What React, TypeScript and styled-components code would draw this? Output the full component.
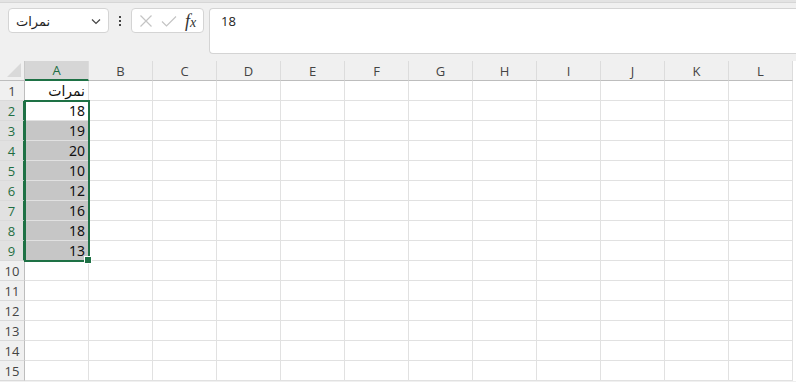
import React from 'react';
import styled, {createGlobalStyle} from 'styled-components';

const GlobalStyle = createGlobalStyle`
  html, body {
    margin: 0;
    padding: 0;
    background: #f0f0f0;
    overflow: hidden;
  }
  body {
    font-family: "Open Sans", "Noto Sans", sans-serif;
  }
`;

const COLUMNS = ['A', 'B', 'C', 'D', 'E', 'F', 'G', 'H', 'I', 'J', 'K', 'L'];
const ROWS = 15;
const values: Record<number, string> = {
  1: 'نمرات',
  2: '18',
  3: '19',
  4: '20',
  5: '10',
  6: '12',
  7: '16',
  8: '18',
  9: '13',
};

export default function App() {
  return (
    <Page>
      <GlobalStyle />
      <TopEdge />
      <Toolbar>
        <NameBox>
          <NameText>نمرات</NameText>
          <svg width="12" height="12" viewBox="0 0 12 12">
            <path d="M2 4.5 L6 8.5 L10 4.5" fill="none" stroke="#444" strokeWidth="1.2" />
          </svg>
        </NameBox>
        <Dots>
          <span />
          <span />
          <span />
        </Dots>
        <FormulaButtons>
          <svg width="14" height="14" viewBox="0 0 14 14">
            <path d="M1.5 1.5 L12.5 12.5 M12.5 1.5 L1.5 12.5" stroke="#c4c4c4" strokeWidth="1.2" />
          </svg>
          <svg width="16" height="14" viewBox="0 0 16 14">
            <path d="M1 7.5 L5.5 12 L15 2.5" fill="none" stroke="#c4c4c4" strokeWidth="1.2" />
          </svg>
          <Fx>
            f<sub>x</sub>
          </Fx>
        </FormulaButtons>
        <FormulaInput>18</FormulaInput>
      </Toolbar>
      <Sheet>
        <Corner>
          <svg width="14" height="14" viewBox="0 0 14 14">
            <path d="M14 0 L14 14 L0 14 Z" fill="#d9d9d9" />
          </svg>
        </Corner>
        {COLUMNS.map(c => (
          <ColHeader key={c} active={c === 'A'}>
            {c}
          </ColHeader>
        ))}
        {Array.from({length: ROWS}, (_, i) => i + 1).map(r => (
          <React.Fragment key={r}>
            <RowHeader active={r >= 2 && r <= 9}>{r}</RowHeader>
            {COLUMNS.map(c => (
              <Cell key={c} selected={c === 'A' && r >= 3 && r <= 9}>
                {c === 'A' ? values[r] : ''}
              </Cell>
            ))}
          </React.Fragment>
        ))}
        <Selection>
          <Handle />
        </Selection>
      </Sheet>
    </Page>
  );
}

const Page = styled.div`
  width: 796px;
  height: 382px;
  overflow: hidden;
  background: #f0f0f0;
`;

const TopEdge = styled.div`
  height: 2px;
  background: #e3e3e3;
  border-bottom: 1px solid #d6d6d6;
`;

const Toolbar = styled.div`
  display: flex;
  align-items: flex-start;
  padding: 5px 0 0 8px;
  height: 55px;
  box-sizing: border-box;
`;

const NameBox = styled.div`
  width: 101px;
  height: 25px;
  box-sizing: border-box;
  background: #fff;
  border: 1px solid #d4d4d4;
  border-radius: 4px;
  display: flex;
  align-items: center;
  justify-content: space-between;
  padding: 0 6px 0 7px;
`;

const NameText = styled.span`
  font-size: 13px;
  color: #222;
  font-family: "Noto Sans", "DejaVu Sans", sans-serif;
`;

const Dots = styled.div`
  width: 22px;
  height: 25px;
  display: flex;
  flex-direction: column;
  align-items: center;
  justify-content: center;
  gap: 2px;
  span {
    width: 2px;
    height: 2px;
    background: #444;
  }
`;

const FormulaButtons = styled.div`
  width: 73px;
  height: 25px;
  box-sizing: border-box;
  background: #fff;
  border: 1px solid #d4d4d4;
  border-radius: 4px;
  display: flex;
  align-items: center;
  gap: 8px;
  padding: 0 4px 0 7px;
`;

const Fx = styled.span`
  font-family: "Liberation Serif", serif;
  font-style: italic;
  font-size: 18px;
  color: #333;
  line-height: 1;
  sub {
    font-size: 14px;
    vertical-align: baseline;
  }
`;

const FormulaInput = styled.div`
  margin-left: 5px;
  flex: 1;
  height: 46px;
  box-sizing: border-box;
  background: #fff;
  border: 1px solid #d4d4d4;
  border-right: none;
  border-radius: 4px 0 0 4px;
  padding: 3px 0 0 11px;
  font-size: 13px;
  color: #222;
`;

const Sheet = styled.div`
  position: relative;
  display: grid;
  grid-template-columns: 25px repeat(12, 64px);
  grid-template-rows: 20px;
  grid-auto-rows: 20px;
  background: #fff;
  margin-top: 3px;
`;

const Corner = styled.div`
  background: #f0f0f0;
  border-right: 1px solid #c8c8c8;
  border-bottom: 1px solid #bdbdbd;
  box-sizing: border-box;
  display: flex;
  align-items: flex-end;
  justify-content: flex-end;
  padding: 0 3px 3px 0;
`;

const ColHeader = styled.div<{active?: boolean}>`
  box-sizing: border-box;
  background: ${p => (p.active ? '#d6d6d6' : '#f0f0f0')};
  color: ${p => (p.active ? '#1e6e42' : '#444')};
  border-right: 1px solid #dcdcdc;
  border-bottom: ${p => (p.active ? '2px solid #1e7145' : '1px solid #bdbdbd')};
  font-size: 13px;
  display: flex;
  align-items: center;
  justify-content: center;
`;

const RowHeader = styled.div<{active?: boolean}>`
  box-sizing: border-box;
  background: ${p => (p.active ? '#e1e1e1' : '#f0f0f0')};
  color: ${p => (p.active ? '#1e6e42' : '#444')};
  border-right: ${p => (p.active ? '2px solid #1e7145' : '1px solid #bdbdbd')};
  border-bottom: 1px solid #dadada;
  font-size: 13px;
  display: flex;
  align-items: center;
  justify-content: center;
`;

const Cell = styled.div<{selected?: boolean}>`
  box-sizing: border-box;
  background: ${p => (p.selected ? '#c6c6c6' : '#fff')};
  border-right: 1px solid #e1e1e1;
  border-bottom: 1px solid #e1e1e1;
  font-size: 14px;
  color: #111;
  display: flex;
  align-items: center;
  justify-content: flex-end;
  padding-right: 3px;
  font-family: "Noto Sans", "DejaVu Sans", sans-serif;
`;

const Selection = styled.div`
  position: absolute;
  left: 24px;
  top: 39px;
  width: 66px;
  height: 162px;
  box-sizing: border-box;
  border: 2px solid #1e7145;
  pointer-events: none;
`;

const Handle = styled.div`
  position: absolute;
  right: -4px;
  bottom: -4px;
  width: 6px;
  height: 6px;
  background: #1e7145;
  border: 1px solid #fff;
`;
